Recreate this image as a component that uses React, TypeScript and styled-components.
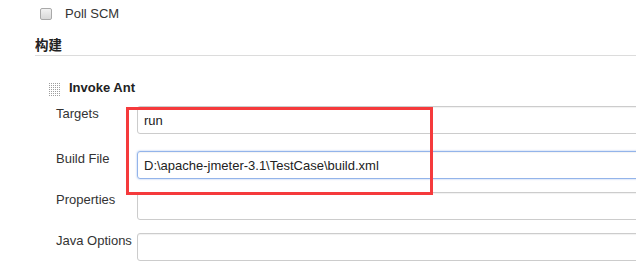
import React from 'react';
import styled, { createGlobalStyle } from 'styled-components';

const GlobalStyle = createGlobalStyle`
  html, body {
    margin: 0;
    padding: 0;
    background: #fff;
    overflow: hidden;
  }
  body {
    font-family: 'Liberation Sans', Arial, 'Noto Sans CJK SC', sans-serif;
    font-size: 13px;
    line-height: 15px;
    color: #333;
  }
`;

const Page = styled.div`
  width: 636px;
  height: 271px;
  overflow: hidden;
`;

const PollRow = styled.label`
  display: flex;
  align-items: center;
  gap: 13px;
  padding: 6px 0 0 40px;
  height: 15px;
`;

const CheckBox = styled.span`
  display: inline-block;
  box-sizing: border-box;
  width: 12px;
  height: 12px;
  border: 1px solid #a9a9a9;
  border-radius: 2px;
  background: linear-gradient(#f2f2f2, #d8d8d8);
`;

const SectionHeader = styled.div`
  margin: 16px 0 0 35px;
  padding-bottom: 3px;
  border-bottom: 1px solid #dcdcdc;
  font-family: 'Noto Sans CJK SC', 'Liberation Sans', sans-serif;
  font-weight: bold;
  font-size: 13.5px;
  line-height: 15px;
  color: #222;
`;

const Builder = styled.div`
  position: relative;
  margin-top: 24px;
`;

const BuilderTitle = styled.div`
  display: flex;
  align-items: center;
  gap: 8px;
  padding-left: 49px;
  font-weight: bold;
  color: #222;
  height: 15px;
`;

const Grip = styled.svg`
  display: block;
  width: 12px;
  height: 14px;
  margin-top: 4px;
`;

const Fields = styled.div`
  display: flex;
  flex-direction: column;
  padding: 11px 0 0 56px;
`;

const Row = styled.div<{ $gap: number }>`
  display: flex;
  align-items: flex-start;
  margin-bottom: ${(p) => p.$gap}px;
`;

const Label = styled.div`
  width: 81px;
  flex-shrink: 0;
  line-height: 15px;
  color: #333;
`;

const Input = styled.div<{ $focus?: boolean }>`
  box-sizing: border-box;
  width: 560px;
  flex-shrink: 0;
  height: 28px;
  padding: 0 6px;
  display: flex;
  align-items: center;
  border: 1px solid ${(p) => (p.$focus ? '#93b4ea' : '#cccccc')};
  border-radius: 3px;
  box-shadow: ${(p) =>
    p.$focus
      ? '0 0 2px rgba(110, 155, 230, 0.7), inset 0 1px 1px rgba(0, 0, 0, 0.05)'
      : 'inset 0 1px 1px rgba(0, 0, 0, 0.06)'};
  color: #222;
  white-space: nowrap;
`;

const Highlight = styled.div`
  position: absolute;
  left: 126px;
  top: 27px;
  width: 307px;
  height: 88px;
  box-sizing: border-box;
  border: 3px solid #f53a3c;
  pointer-events: none;
`;

const fields = [
  { label: 'Targets', value: 'run', gap: 17 },
  { label: 'Build File', value: 'D:\\apache-jmeter-3.1\\TestCase\\build.xml', gap: 13, focus: true },
  { label: 'Properties', value: '', gap: 13 },
  { label: 'Java Options', value: '', gap: 0 },
];

function GripIcon() {
  const dots = [];
  for (let r = 0; r < 7; r++) {
    for (let c = 0; c < 6; c++) {
      dots.push(<rect key={`${r}-${c}`} x={c * 2} y={r * 2} width="1" height="1" fill="#9e9e9e" />);
    }
  }
  return (
    <Grip viewBox="0 0 12 14">
      {dots}
    </Grip>
  );
}

export default function App() {
  return (
    <Page>
      <GlobalStyle />
      <PollRow>
        <CheckBox />
        <span>Poll SCM</span>
      </PollRow>
      <SectionHeader>构建</SectionHeader>
      <Builder>
        <BuilderTitle>
          <GripIcon />
          <span>Invoke Ant</span>
        </BuilderTitle>
        <Fields>
          {fields.map((f) => (
            <Row key={f.label} $gap={f.gap}>
              <Label>{f.label}</Label>
              <Input $focus={f.focus}>{f.value}</Input>
            </Row>
          ))}
        </Fields>
        <Highlight />
      </Builder>
    </Page>
  );
}
